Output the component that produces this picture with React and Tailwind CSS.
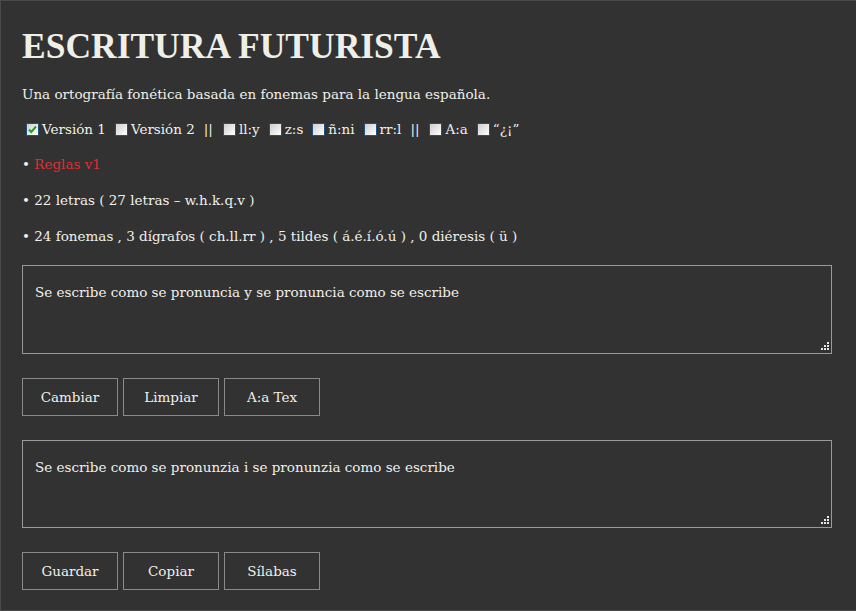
import React, { useState } from 'react';

const serif = { fontFamily: '"DejaVu Serif", "Liberation Serif", serif' };

const Casilla = ({ marcada, onClick }) => (
  <span
    onClick={onClick}
    className="inline-block shrink-0 w-[13px] h-[13px] border border-[#1c5180] bg-gradient-to-br from-[#cfcfcf] to-white relative cursor-pointer"
  >
    {marcada && (
      <svg width="11" height="11" viewBox="0 0 11 11" className="absolute left-0 top-0">
        <path d="M2 5.5 L4.3 8 L9 2.5" fill="none" stroke="#21a121" strokeWidth="2" />
      </svg>
    )}
  </span>
);

const Boton = ({ children }) => (
  <button className="w-[96px] h-[38px] border border-[#8a8a8a] text-[#f0f0ea] text-[13.5px] bg-transparent hover:bg-[#3c3c3c]">
    {children}
  </button>
);

const Caja = ({ valor, alto }) => (
  <div className="relative w-fit">
    <textarea
      defaultValue={valor}
      className={`block w-[810px] ${alto} border border-[#9a9a9a] bg-transparent text-[#f0f0ea] text-[13.5px] px-[12px] pt-[18px] leading-[16px] resize-none outline-none`}
      style={serif}
    />
    <svg width="10" height="10" viewBox="0 0 10 10" className="absolute right-[2px] bottom-[2px]">
      {[[7, 0], [4, 3], [7, 3], [1, 6], [4, 6], [7, 6]].map(([x, y], i) => (
        <rect key={i} x={x} y={y} width="2" height="2" fill="#e8e8e0" />
      ))}
    </svg>
  </div>
);

const opciones = [
  ['Versión 1', true],
  ['Versión 2', false],
  '||',
  ['ll:y', false],
  ['z:s', false],
  ['ñ:ni', false],
  ['rr:l', false],
  '||',
  ['A:a', false],
  ['“¿¡”', false],
];

export default function App() {
  const [marcas, setMarcas] = useState(opciones.map(o => (Array.isArray(o) ? o[1] : false)));

  return (
    <div className="w-[856px] h-[611px] bg-[#323232] border-l border-t border-b border-[#4a4a4a] text-[#f0f0ea] overflow-hidden" style={serif}>
      <div className="pl-[21px] pt-[26px]">
        <h1 className="text-[35.5px] font-bold leading-[38px] text-[#efefe9]" style={{ fontFamily: '"Liberation Serif", serif' }}>
          ESCRITURA FUTURISTA
        </h1>
        <p className="text-[13.5px] mt-[21px] leading-[16px]">Una ortografía fonética basada en fonemas para la lengua española.</p>

        <div className="flex items-center text-[13.5px] mt-[19px] leading-[16px] pl-[4px]">
          {opciones.map((o, i) =>
            Array.isArray(o) ? (
              <label key={i} className="flex items-center gap-[3px] mr-[9px]">
                <Casilla
                  marcada={marcas[i]}
                  onClick={() => setMarcas(m => m.map((v, j) => (j === i ? !v : v)))}
                />
                <span>{o[0]}</span>
              </label>
            ) : (
              <span key={i} className="mr-[10px]">{o}</span>
            )
          )}
        </div>

        <p className="text-[13.5px] mt-[19px] leading-[16px]">
          • <a href="#" className="text-[#dc3036]">Reglas v1</a>
        </p>
        <p className="text-[13.5px] mt-[20px] leading-[16px]">• 22 letras ( 27 letras – w.h.k.q.v )</p>
        <p className="text-[13.5px] mt-[20px] leading-[16px]">• 24 fonemas , 3 dígrafos ( ch.ll.rr ) , 5 tildes ( á.é.í.ó.ú ) , 0 diéresis ( ü )</p>

        <div className="mt-[21px]">
          <Caja valor="Se escribe como se pronuncia y se pronuncia como se escribe" alto="h-[89px]" />
        </div>
        <div className="flex gap-[5px] mt-[24px]">
          <Boton>Cambiar</Boton>
          <Boton>Limpiar</Boton>
          <Boton>A:a Tex</Boton>
        </div>

        <div className="mt-[24px]">
          <Caja valor="Se escribe como se pronunzia i se pronunzia como se escribe" alto="h-[88px]" />
        </div>
        <div className="flex gap-[5px] mt-[24px]">
          <Boton>Guardar</Boton>
          <Boton>Copiar</Boton>
          <Boton>Sílabas</Boton>
        </div>
      </div>
    </div>
  );
}
